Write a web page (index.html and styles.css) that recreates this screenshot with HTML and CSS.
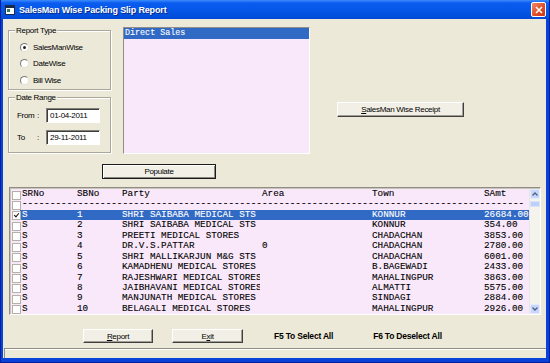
FILE: index.html
```html
<!DOCTYPE html>
<html lang="en">
<head>
    <meta charset="UTF-8">
    <title>SalesMan Wise Packing Slip Report</title>
    <link rel="stylesheet" href="styles.css">
</head>
<body>
    <div class="window">
        <div class="titlebar">
            <svg class="app-icon" width="10" height="10" viewBox="0 0 10 10">
                <rect x="0.5" y="0.5" width="9" height="9" fill="#ffffff" stroke="#1b2a4a"/>
                <rect x="1" y="1" width="8" height="2" fill="#1b2a4a"/>
                <rect x="2" y="4" width="3" height="3" fill="#2f7d5b"/>
            </svg>
            <span class="title">SalesMan Wise Packing Slip Report</span>
            <div class="close-btn">
                <svg width="8" height="8" viewBox="0 0 8 8">
                    <path d="M1 1 L7 7 M7 1 L1 7" stroke="#ffffff" stroke-width="1.6"/>
                </svg>
            </div>
        </div>

        <div class="client">
            <div class="top-row">
                <div class="left-col">
                    <div class="group group-type">
                        <span class="group-title">Report Type</span>
                        <div class="radio"><span class="radio-dot checked"></span>SalesManWise</div>
                        <div class="radio"><span class="radio-dot"></span>DateWise</div>
                        <div class="radio"><span class="radio-dot"></span>Bill Wise</div>
                    </div>
                    <div class="group group-date">
                        <span class="group-title">Date Range</span>
                        <div class="field">
                            <span class="field-label">From</span><span class="colon">:</span>
                            <span class="input">01-04-2011</span>
                        </div>
                        <div class="field">
                            <span class="field-label">To</span><span class="colon">:</span>
                            <span class="input">29-11-2011</span>
                        </div>
                    </div>
                </div>

                <div class="listbox">
                    <div class="list-item selected">Direct Sales</div>
                </div>

                <div class="receipt-area">
                    <div class="btn btn-receipt"><u>S</u>alesMan Wise Receipt</div>
                </div>
            </div>

            <div class="populate-row">
                <div class="btn btn-default">Populate</div>
            </div>

            <div class="grid">
                <div class="grid-body">
                    <div class="grid-row">
                        <span class="chk"></span>
                        <span class="cell">SRNo</span><span class="cell">SBNo</span><span class="cell">Party</span>
                        <span class="cell">Area</span><span class="cell">Town</span><span class="cell">SAmt</span>
                    </div>
                    <div class="grid-row">
                        <span class="chk"></span>
                        <span class="cell dashes">------------------------------------------------------------------------------------------</span>
                    </div>
                    <div class="grid-row selected">
                        <span class="chk checked"></span>
                        <span class="cell">S</span><span class="cell">1</span><span class="cell">SHRI SAIBABA MEDICAL STS</span>
                        <span class="cell"></span><span class="cell">KONNUR</span><span class="cell">26684.00</span>
                    </div>
                    <div class="grid-row">
                        <span class="chk"></span>
                        <span class="cell">S</span><span class="cell">2</span><span class="cell">SHRI SAIBABA MEDICAL STS</span>
                        <span class="cell"></span><span class="cell">KONNUR</span><span class="cell">354.00</span>
                    </div>
                    <div class="grid-row">
                        <span class="chk"></span>
                        <span class="cell">S</span><span class="cell">3</span><span class="cell">PREETI MEDICAL STORES</span>
                        <span class="cell"></span><span class="cell">CHADACHAN</span><span class="cell">3853.00</span>
                    </div>
                    <div class="grid-row">
                        <span class="chk"></span>
                        <span class="cell">S</span><span class="cell">4</span><span class="cell">DR.V.S.PATTAR</span>
                        <span class="cell">0</span><span class="cell">CHADACHAN</span><span class="cell">2780.00</span>
                    </div>
                    <div class="grid-row">
                        <span class="chk"></span>
                        <span class="cell">S</span><span class="cell">5</span><span class="cell">SHRI MALLIKARJUN M&amp;G STS</span>
                        <span class="cell"></span><span class="cell">CHADACHAN</span><span class="cell">6001.00</span>
                    </div>
                    <div class="grid-row">
                        <span class="chk"></span>
                        <span class="cell">S</span><span class="cell">6</span><span class="cell">KAMADHENU MEDICAL STORES</span>
                        <span class="cell"></span><span class="cell">B.BAGEWADI</span><span class="cell">2433.00</span>
                    </div>
                    <div class="grid-row">
                        <span class="chk"></span>
                        <span class="cell">S</span><span class="cell">7</span><span class="cell">RAJESHWARI MEDICAL STORES</span>
                        <span class="cell"></span><span class="cell">MAHALINGPUR</span><span class="cell">3863.00</span>
                    </div>
                    <div class="grid-row">
                        <span class="chk"></span>
                        <span class="cell">S</span><span class="cell">8</span><span class="cell">JAIBHAVANI MEDICAL STORES</span>
                        <span class="cell"></span><span class="cell">ALMATTI</span><span class="cell">5575.00</span>
                    </div>
                    <div class="grid-row">
                        <span class="chk"></span>
                        <span class="cell">S</span><span class="cell">9</span><span class="cell">MANJUNATH MEDICAL STORES</span>
                        <span class="cell"></span><span class="cell">SINDAGI</span><span class="cell">2884.00</span>
                    </div>
                    <div class="grid-row">
                        <span class="chk"></span>
                        <span class="cell">S</span><span class="cell">10</span><span class="cell">BELAGALI MEDICAL STORES</span>
                        <span class="cell"></span><span class="cell">MAHALINGPUR</span><span class="cell">2926.00</span>
                    </div>
                </div>
                <div class="scrollbar">
                    <div class="sb-btn">
                        <svg width="6" height="4" viewBox="0 0 6 4"><path d="M0.5 3.5 L3 1 L5.5 3.5" fill="none" stroke="#4d6185" stroke-width="1.3"/></svg>
                    </div>
                    <div class="sb-thumb"></div>
                    <div class="sb-track"></div>
                    <div class="sb-btn">
                        <svg width="6" height="4" viewBox="0 0 6 4"><path d="M0.5 0.5 L3 3 L5.5 0.5" fill="none" stroke="#4d6185" stroke-width="1.3"/></svg>
                    </div>
                </div>
            </div>

            <div class="actions">
                <div class="btn btn-report"><u>R</u>eport</div>
                <div class="btn btn-exit">E<u>x</u>it</div>
                <span class="hint hint-f5">F5 To Select All</span>
                <span class="hint hint-f6">F6 To Deselect All</span>
            </div>

            <div class="statusbar"></div>
        </div>
    </div>
</body>
</html>
```

FILE: styles.css
```css
:root {
    --face: #ece9d8;
    --list-bg: #f8e8f9;
    --select: #316ac5;
    --frame: #0842d8;
}

body {
    margin: 0;
    font-family: 'Liberation Sans', Arial, sans-serif;
    font-size: 8px;
    letter-spacing: -0.3px;
    color: #000;
}

.window {
    width: 550px;
    height: 363px;
    display: flex;
    flex-direction: column;
    background: var(--frame);
    box-sizing: border-box;
    border: 1px solid #001f9c;
    border-top: none;
}

/* Titelleiste */
.titlebar {
    height: 20px;
    display: flex;
    align-items: center;
    background: linear-gradient(#3d8bfa 0, #0a5cf0 3px, #0558e8 50%, #0049d6 100%);
    padding: 0 3px 0 4px;
}

.app-icon {
    margin-right: 4px;
}

.title {
    color: #fff;
    font-weight: bold;
    font-size: 9px;
    letter-spacing: -0.15px;
    text-shadow: 1px 1px 0 #0a2a8a;
    flex: 1;
}

.close-btn {
    width: 13px;
    height: 13px;
    border: 1px solid #fff;
    border-radius: 2px;
    background: linear-gradient(135deg, #f08a6a, #dd4a22 60%, #c8381a);
    display: flex;
    align-items: center;
    justify-content: center;
}

.client {
    flex: 1;
    background: var(--face);
    margin: 0 3px 4px 2px;
    display: flex;
    flex-direction: column;
}

.top-row {
    display: flex;
    align-items: flex-start;
    margin-top: 8px;
    height: 127px;
}

.left-col {
    width: 103px;
    margin-left: 5px;
    padding-top: 3px;
}

.group {
    position: relative;
    border: 1px solid #aca899;
    box-shadow: inset 1px 1px 0 #fff, 1px 1px 0 #fff;
    box-sizing: border-box;
}

.group-title {
    position: absolute;
    top: -6px;
    left: 6px;
    padding: 0 1px;
    background: var(--face);
    line-height: 11px;
}

.group-type {
    height: 60px;
    padding: 8px 0 0 11px;
}

.radio {
    height: 16.5px;
    display: flex;
    align-items: center;
}

.radio-dot {
    width: 7px;
    height: 7px;
    border-radius: 50%;
    border: 1px solid #8f8d86;
    border-color: #7c7a72 #e3e1d8 #e3e1d8 #7c7a72;
    background: #fff;
    margin-right: 4px;
    position: relative;
}

.radio-dot.checked::after {
    content: '';
    position: absolute;
    left: 2px;
    top: 2px;
    width: 3px;
    height: 3px;
    border-radius: 50%;
    background: #222;
}

.group-date {
    height: 56px;
    margin-top: 7px;
    padding: 10px 0 0 8px;
}

.field {
    display: flex;
    align-items: center;
    height: 15px;
    margin-bottom: 7px;
}

.field-label {
    width: 20px;
}

.colon {
    width: 9px;
}

.input {
    width: 54px;
    height: 15px;
    box-sizing: border-box;
    background: #fff;
    border: 1px solid;
    border-color: #828079 #fff #fff #828079;
    box-shadow: inset 1px 1px 0 #3c3c3c;
    padding: 0 0 0 3px;
    line-height: 13px;
}

.listbox {
    width: 187px;
    height: 127px;
    margin-left: 12px;
    box-sizing: border-box;
    background: var(--list-bg);
    border: 1px solid;
    border-color: #8f8d86 #fff #fff #8f8d86;
    padding: 0;
}

.list-item {
    font-family: 'Liberation Mono', 'Courier New', monospace;
    font-size: 8.4px;
    letter-spacing: 0;
    line-height: 11px;
    padding-left: 1px;
    -webkit-text-stroke: 0.1px;
}

.list-item.selected {
    background: var(--select);
    color: #fff;
}

.receipt-area {
    margin: 75px 0 0 27px;
}

/* Buttons im klassischen Stil */
.btn {
    box-sizing: border-box;
    height: 15px;
    background: #f2f0e6;
    border: 1px solid;
    border-color: #fff #404040 #404040 #fff;
    box-shadow: inset -1px -1px 0 #a09e94;
    display: flex;
    align-items: center;
    justify-content: center;
}

.btn-receipt {
    width: 127px;
}

.populate-row {
    margin: 10px 0 0 99px;
}

.btn-default {
    width: 114px;
    border: 1px solid #1a1a1a;
    box-shadow: inset 1px 1px 0 #fff, inset -1px -1px 0 #8a887e;
}

/* Tabelle */
.grid {
    width: 532px;
    height: 128px;
    margin: 8px 0 0 6px;
    box-sizing: border-box;
    border: 1px solid;
    border-color: #8f8d86 #fff #fff #8f8d86;
    box-shadow: inset 1px 1px 0 #c8c5b8;
    padding: 1px 0 0 1px;
    display: flex;
    background: var(--list-bg);
}

.grid-body {
    flex: 1;
    font-family: 'Liberation Mono', 'Courier New', monospace;
    font-size: 9.3px;
    letter-spacing: 0;
    -webkit-text-stroke: 0.1px;
}

.grid-row {
    display: grid;
    grid-template-columns: 9px 55px 45px 140px 110px 112px 47px;
    height: 10.45px;
    line-height: 10.45px;
    white-space: nowrap;
}

.cell {
    padding-left: 2px;
    overflow: hidden;
}

.dashes {
    grid-column: 2 / 8;
}

.grid-row.selected .cell {
    background: var(--select);
    color: #fff;
}

.chk {
    width: 7px;
    height: 7px;
    margin: 1.5px 0 0 1px;
    background: #fff;
    border: 1px solid #b4b2a8;
    box-sizing: content-box;
    position: relative;
}

.chk.checked::after {
    content: '';
    position: absolute;
    left: 2px;
    top: 0;
    width: 2px;
    height: 4px;
    border: solid #111;
    border-width: 0 1.5px 1.5px 0;
    transform: rotate(40deg);
}

.scrollbar {
    width: 10px;
    display: flex;
    flex-direction: column;
    background: #f4f3ee;
    border-left: 1px solid #e8e6de;
}

.sb-btn {
    height: 10px;
    box-sizing: border-box;
    background: #c8d7fb;
    border: 1px solid #e4ecfd;
    border-radius: 1px;
    display: flex;
    align-items: center;
    justify-content: center;
}

.sb-thumb {
    height: 4px;
    margin-top: 2px;
    background: #bfd0f8;
    border: 1px solid #d8e3fc;
}

.sb-track {
    flex: 1;
}

.actions {
    display: flex;
    align-items: center;
    height: 14px;
    margin-top: 14px;
}

.btn-report {
    width: 70px;
    height: 14px;
    margin-left: 80px;
}

.btn-exit {
    width: 71px;
    height: 14px;
    margin-left: 19px;
}

.hint {
    font-weight: bold;
    font-size: 8.5px;
    letter-spacing: -0.2px;
}

.hint-f5 {
    margin-left: 31px;
}

.hint-f6 {
    margin-left: 40px;
}

.statusbar {
    height: 9px;
    margin-top: 5px;
    border-top: 1px solid #8f8d86;
    border-left: 1px solid #8f8d86;
    box-shadow: inset 0 1px 0 #fff;
    margin-left: 1px;
}
```
